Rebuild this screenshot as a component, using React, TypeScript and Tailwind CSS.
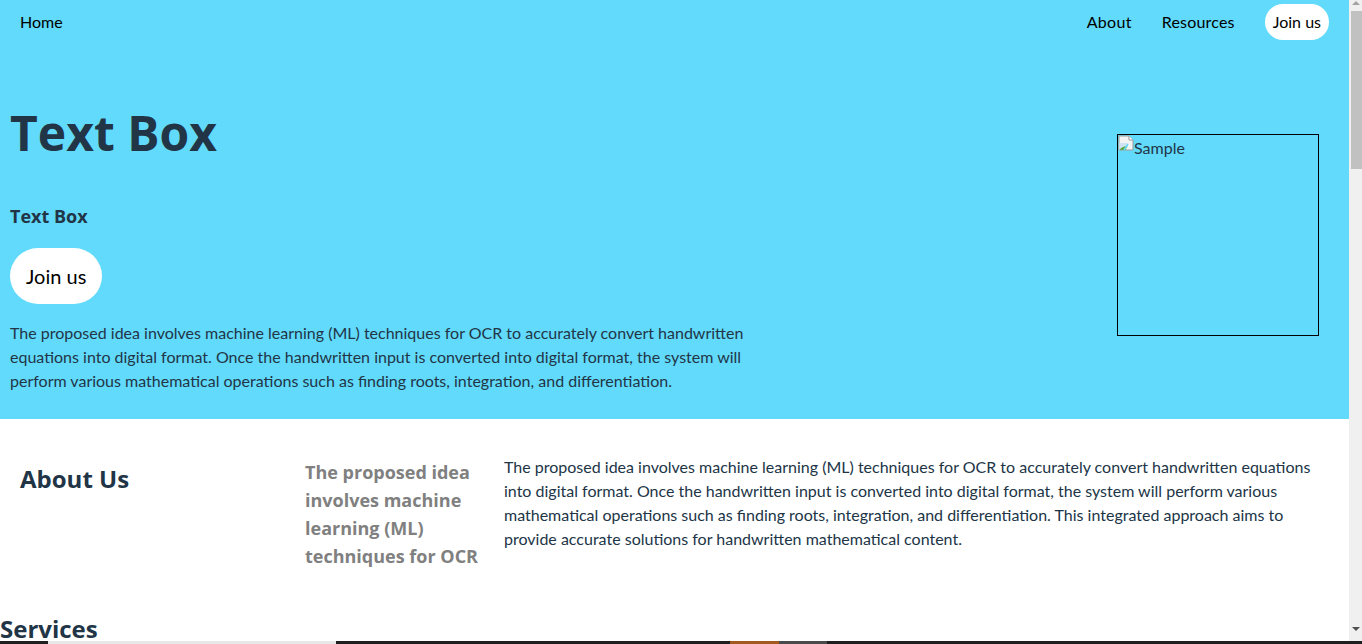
const body = '"Lato", "Liberation Sans", sans-serif';
const heading = '"Open Sans", "Noto Sans", sans-serif';

function BrokenImage() {
  return (
    <svg width="16" height="16" viewBox="0 0 16 16" className="shrink-0">
      <path d="M1 1h10l4 4v10H1z" fill="#f4f4f4" stroke="#9a9a9a" />
      <path d="M11 1v4h4" fill="#ffffff" stroke="#9a9a9a" />
      <path d="M1.5 8h8l-3 7H1.5z" fill="#cfe3f4" />
      <path d="M1.5 15c2-3 5-4 8-4l-2 4z" fill="#5fa640" />
      <path d="M10 9l-4 6" stroke="#61dafb" strokeWidth="1.5" />
    </svg>
  );
}

// page scrollbar, as the browser showed it
function ScrollBar() {
  return (
    <div className="flex h-full w-[13px] shrink-0 flex-col items-center bg-[#f0f0f0]">
      <svg width="8" height="5" viewBox="0 0 8 5" className="mt-[1px] shrink-0">
        <path d="M4 0l4 4H0z" fill="#a3a3a3" />
      </svg>
      <div className="ml-[2px] mt-[5px] h-[158px] w-[11px] bg-[#c1c1c1]" />
      <div className="flex-1" />
      <svg width="8" height="5" viewBox="0 0 8 5" className="mb-[12px] shrink-0">
        <path d="M0 0h8L4 4z" fill="#505050" />
      </svg>
    </div>
  );
}

export default function App() {
  return (
    <div className="flex h-screen bg-white text-[#213547]" style={{ fontFamily: body }}>
      <main className="min-w-0 flex-1 overflow-hidden">
        <header className="bg-[#61dafb]">
          <nav className="flex h-11 items-center justify-between pl-5 pr-5 text-base text-black">
            <a href="#">Home</a>
            <div className="flex items-center gap-[30px]">
              <a href="#" className="tracking-[0.3px]">About</a>
              <a href="#" className="tracking-[0.2px]">Resources</a>
              <button className="h-9 rounded-full bg-white px-2 text-base text-black">Join us</button>
            </div>
          </nav>

          <section className="flex items-start justify-between pb-[26px] pl-[10px] pr-[30px] pt-[65px]">
            <div className="w-[760px]">
              <h1 className="text-5xl font-bold leading-12" style={{ fontFamily: heading }}>
                Text Box
              </h1>
              <h3 className="mt-[45px] text-lg font-bold leading-7" style={{ fontFamily: heading }}>
                Text Box
              </h3>
              <button className="mt-[18px] h-14 rounded-full bg-white px-4 text-xl text-black">Join us</button>
              <p className="mt-[17px] text-base leading-6">
                The proposed idea involves machine learning (ML) techniques for OCR to accurately convert handwritten
                equations into digital format. Once the handwritten input is converted into digital format, the system
                will perform various mathematical operations such as finding roots, integration, and differentiation.
              </p>
            </div>
            <div className="mt-[25px] flex h-[202px] w-[202px] items-start border border-black">
              <BrokenImage />
              <span className="mt-[3px] leading-5">Sample</span>
            </div>
          </section>
        </header>

        <section className="flex items-start gap-5 px-5 pt-9">
          <h2 className="mt-2 w-[265px] shrink-0 text-2xl font-bold leading-8" style={{ fontFamily: heading }}>
            About Us
          </h2>
          <h4 className="mt-[3px] w-[179px] shrink-0 text-lg font-bold leading-7 text-[#808080]" style={{ fontFamily: heading }}>
            The proposed idea involves machine learning (ML) techniques for OCR
          </h4>
          <p className="flex-1 text-base leading-6">
            The proposed idea involves machine learning (ML) techniques for OCR to accurately convert handwritten
            equations into digital format. Once the handwritten input is converted into digital format, the system will
            perform various mathematical operations such as finding roots, integration, and differentiation. This
            integrated approach aims to provide accurate solutions for handwritten mathematical content.
          </p>
        </section>

        <section className="mt-[43px]">
          <h2 className="text-2xl font-bold leading-8" style={{ fontFamily: heading }}>
            Services
          </h2>
          <div className="grid grid-cols-3 gap-5 p-5">
            <div className="h-40 bg-[#1f1f1f]" />
            <div className="h-40 bg-[#1f1f1f]" />
            <div className="h-40 bg-[#1f1f1f]" />
          </div>
        </section>
      </main>
      <ScrollBar />

      <div className="fixed bottom-0 left-0 right-0 flex h-[3px] bg-[#1f1f1f]">
        <div className="w-12" />
        <div className="w-[288px] bg-[#e8e8e8]" />
        <div className="w-[394px]" />
        <div className="w-[49px] bg-[#a45a1e]" />
        <div className="w-12 bg-[#4a4a4a]" />
      </div>
    </div>
  );
}
